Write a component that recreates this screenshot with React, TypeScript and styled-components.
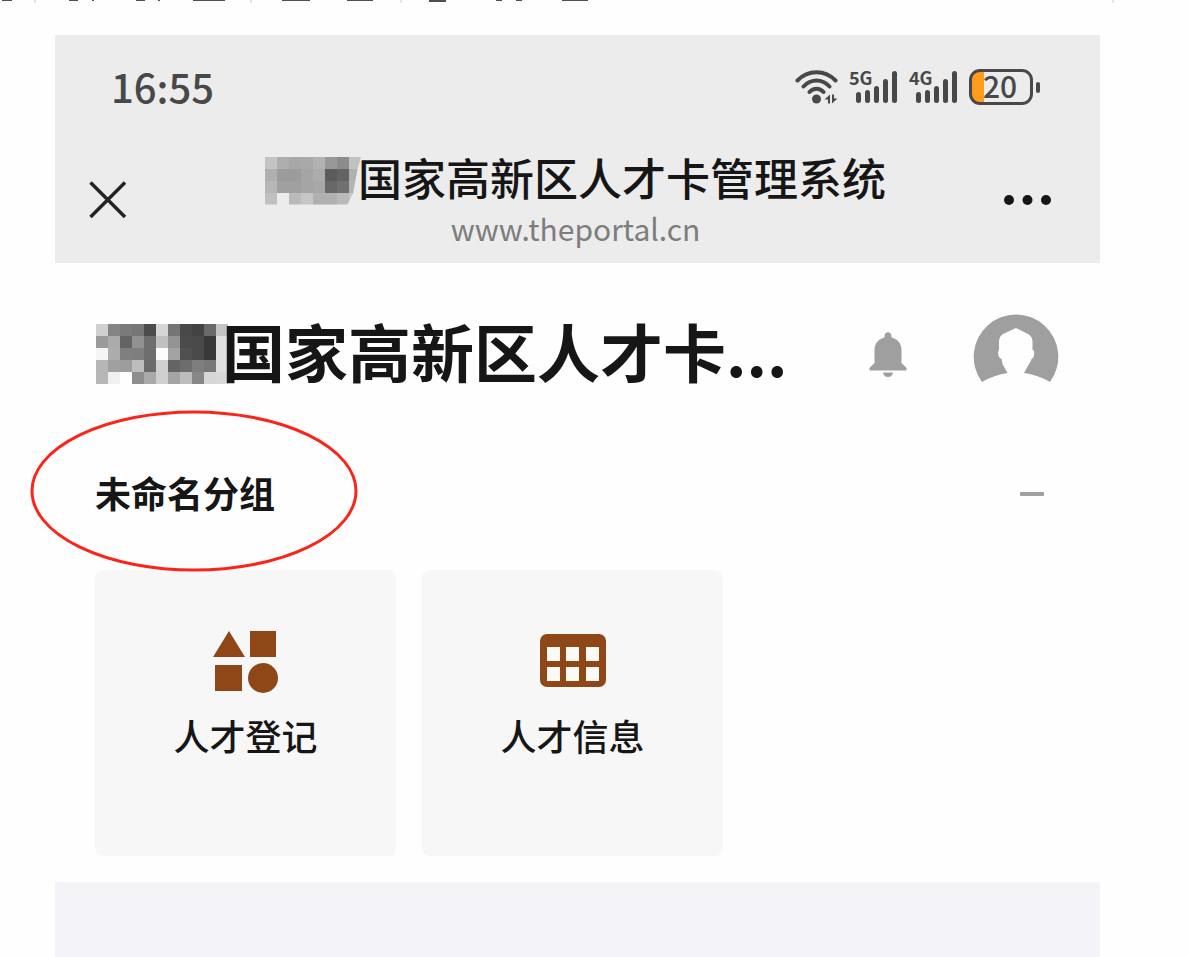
import React from "react";
import styled, { createGlobalStyle } from "styled-components";

const GlobalStyle = createGlobalStyle`
  * { box-sizing: border-box; }
  body {
    margin: 0;
    background: #fefefe;
    color: #161616;
    font-family: "Noto Sans CJK SC", "Noto Sans", sans-serif;
  }
  button { padding: 0; border: 0; background: none; color: inherit; font: inherit; cursor: pointer; }
  h1, p { margin: 0; }
  svg { display: block; }
`;

const Page = styled.div`
  position: relative;
  display: flex;
  flex-direction: column;
  min-height: 100vh;
`;

const Strip = styled.div`
  height: 35px;
  flex: none;
  overflow: hidden;
`;

const Phone = styled.main`
  flex: 1;
  display: flex;
  flex-direction: column;
  margin: 0 89px 0 55px;
`;

const Browser = styled.header`
  background: #ececec;
`;

const StatusBar = styled.div`
  display: flex;
  align-items: center;
  justify-content: space-between;
  height: 106px;
  padding: 0 60px 2px 56px;
  color: #484848;
`;

const Clock = styled.time`
  padding-bottom: 2px;
  font-size: 40px;
  line-height: 48px;
  font-weight: 500;
`;

const StatusIcons = styled.div`
  display: flex;
  align-items: center;
  gap: 11px;
`;

const Signal = styled.div`
  position: relative;
  width: 49px;
`;

const SignalLabel = styled.span`
  position: absolute;
  top: -2px;
  left: 0;
  font-size: 18px;
  line-height: 18px;
  font-weight: 700;
`;

const BatteryBox = styled.div`
  display: flex;
  align-items: center;
  gap: 3px;
`;

const BatteryShell = styled.div`
  width: 64px;
  height: 36px;
  border: 3px solid #484848;
  border-radius: 11px;
  background: linear-gradient(to right, #ff9c1c 12px, transparent 12px);
  padding-left: 11px;
  font-size: 30px;
  line-height: 26px;
  font-weight: 500;
`;

const BatteryTip = styled.div`
  width: 4px;
  height: 11px;
  border-radius: 2px;
  background: #484848;
`;

const NavBar = styled.div`
  display: grid;
  grid-template-columns: 58px 1fr 48px;
  align-items: center;
  height: 122px;
  padding: 0 48px 4px 34px;
`;

const NavTitle = styled.div`
  display: flex;
  flex-direction: column;
  align-items: center;
  padding-bottom: 5px;
`;

const SiteName = styled.p`
  display: flex;
  align-items: center;
  font-size: 44px;
  line-height: 60px;
  font-weight: 500;
  white-space: nowrap;
`;

const SiteUrl = styled.p`
  font-size: 30px;
  line-height: 42px;
  color: #7d7d7d;
`;

const AppBar = styled.div`
  display: flex;
  align-items: center;
  height: 182px;
  padding: 2px 41px 0 41px;
`;

const AppTitle = styled.h1`
  flex: 1;
  display: flex;
  align-items: center;
  padding-bottom: 10px;
  font-size: 63px;
  line-height: 80px;
  font-weight: 700;
  white-space: nowrap;
`;

const AppActions = styled.div`
  display: flex;
  align-items: center;
  gap: 66px;
`;

const Masked = styled.span<{ $overlap: number }>`
  padding-top: 8px;
  margin-right: ${(p) => -p.$overlap}px;
`;

const GroupHeader = styled.div`
  display: flex;
  align-items: center;
  justify-content: space-between;
  height: 98px;
  padding: 0 56px 0 40px;
`;

const GroupName = styled.h2`
  margin: 0;
  padding-bottom: 5px;
  font-size: 36px;
  line-height: 48px;
  font-weight: 700;
`;

const Cards = styled.div`
  display: grid;
  grid-template-columns: repeat(3, 1fr);
  gap: 26px;
  padding: 27px 50px 26px 40px;
`;

const Card = styled.a`
  display: flex;
  flex-direction: column;
  align-items: center;
  gap: 13px;
  height: 286px;
  padding-top: 58px;
  border-radius: 8px;
  background: #f7f7f7;
  color: inherit;
  text-decoration: none;
  font-size: 36px;
  line-height: 52px;
  font-weight: 500;
`;

const Footer = styled.div`
  flex: 1;
  min-height: 75px;
  background: #f3f3f8;
`;

const Annotation = styled.svg`
  position: absolute;
  top: 410px;
  left: 30px;
  pointer-events: none;
`;

const toolbarMarks: [number, number, number][] = [
  [2, 10, 1], [69, 9, 1], [92, 2, 1], [136, 9, 1], [158, 2, 1], [193, 32, 1],
  [282, 28, 1], [347, 26, 1], [429, 17, 2], [496, 6, 1], [516, 6, 1], [562, 26, 1],
];
const toolbarDividers = [34, 250, 400, 1112];

const smallMosaic = [
  "c4 ae a8 a9 b2 98 8c c2",
  "b0 9c 9c a5 ac 5b 63 b0",
  "b7 a0 a0 a5 a8 68 70 b4",
  "c0 ec ba c6 b0 b0 ba c8",
];
const largeMosaic = [
  "d0 84 7a 76 4c d6 75 49 43 69 c4",
  "9a ab 64 91 6e c0 94 4b 4a 39 e0",
  "f5 ac 7f 7e 6e fc a3 50 4a 39 e0",
  "b6 a0 9d bd 6b d0 64 6d 7e 78 e0",
  "b7 f0 fe 8d aa d0 a4 bd 87 d6 d8",
];

function Mosaic({ rows, clip }: { rows: string[]; clip?: string }) {
  const cells = rows.map((r) => r.split(" "));
  return (
    <svg
      width={cells[0].length * 12}
      height={rows.length * 12}
      shapeRendering="crispEdges"
      clipPath={clip}
      aria-hidden="true"
    >
      {cells.map((row, y) =>
        row.map((c, x) => (
          <rect key={`${x}-${y}`} x={x * 12} y={y * 12} width="12" height="12" fill={`#${c}${c}${c}`} />
        ))
      )}
    </svg>
  );
}

function SignalIcon({ label }: { label: string }) {
  return (
    <Signal>
      <svg width="49" height="34" fill="currentColor" aria-hidden="true">
        {[22, 20, 16, 9, 1].map((y, i) => (
          <rect key={y} x={7 + i * 9} y={y} width="5" height={33 - y} rx="2.5" />
        ))}
      </svg>
      <SignalLabel>{label}</SignalLabel>
    </Signal>
  );
}

export default function App() {
  return (
    <>
      <GlobalStyle />
      <Page>
        <Strip aria-hidden="true">
          <svg width="1120" height="4" shapeRendering="crispEdges">
            {toolbarMarks.map(([x, w, h]) => (
              <rect key={x} x={x} y="0" width={w} height={h} fill="#505050" />
            ))}
            {toolbarDividers.map((x) => (
              <rect key={x} x={x} y="0" width="2" height="3" fill="#e2e2e2" />
            ))}
          </svg>
        </Strip>
        <Phone>
          <Browser>
            <StatusBar>
              <Clock>16:55</Clock>
              <StatusIcons>
                <svg width="43" height="36" fill="none" stroke="currentColor" strokeWidth="4" strokeLinecap="round" aria-hidden="true">
                  <path d="M2.500 11.500C13 .5 30 .5 40.500 11.500M8.500 17.500C16 9.500 27 9.500 34.500 17.500M14.500 23C18.500 18.500 24.500 18.500 28.500 23" />
                  <circle cx="21.500" cy="30" r="4.500" fill="currentColor" stroke="none" />
                  <path d="M29.500 30.500L35 25.500V34.500H33V30.500ZM42.500 29.500L37 34.500V25.500H39V29.500Z" fill="currentColor" stroke="none" />
                </svg>
                <SignalIcon label="5G" />
                <SignalIcon label="4G" />
                <BatteryBox>
                  <BatteryShell>20</BatteryShell>
                  <BatteryTip />
                </BatteryBox>
              </StatusIcons>
            </StatusBar>
            <NavBar>
              <button type="button" aria-label="关闭">
                <svg width="38" height="38" stroke="#242424" strokeWidth="3.500" aria-hidden="true">
                  <path d="M1.500 1.500L36 36M36 1.500L1.500 36" />
                </svg>
              </button>
              <NavTitle>
                <SiteName>
                  <Masked $overlap={3}>
                    <Mosaic rows={smallMosaic} clip="polygon(0 0, 100% 0, 96% 30%, 92% 75%, 86% 100%, 0 100%)" />
                  </Masked>
                  国家高新区人才卡管理系统
                </SiteName>
                <SiteUrl>www.theportal.cn</SiteUrl>
              </NavTitle>
              <button type="button" aria-label="更多">
                <svg width="48" height="12" fill="#161616" aria-hidden="true">
                  <circle cx="5" cy="6" r="5" />
                  <circle cx="23.500" cy="6" r="5" />
                  <circle cx="42" cy="6" r="5" />
                </svg>
              </button>
            </NavBar>
          </Browser>

          <AppBar>
            <AppTitle>
              <Masked $overlap={6}>
                <Mosaic rows={largeMosaic} />
              </Masked>
              国家高新区人才卡...
            </AppTitle>
            <AppActions>
              <button type="button" aria-label="通知">
                <svg width="38" height="46" fill="#9f9f9f" aria-hidden="true">
                  <path d="M15.500 5.500V4C15.500-1 22.500-1 22.500 4V5.500C29 7 32.500 12 32.500 18V31L37.500 36V38.500H.5V36L5.500 31V18C5.500 12 9 7 15.500 5.500Z" />
                  <path d="M14 40.500H24C23.500 46.500 14.500 46.500 14 40.500Z" />
                </svg>
              </button>
              <button type="button" aria-label="个人中心">
                <svg width="86" height="82" fill="#9f9f9f" aria-hidden="true">
                  <path d="M9 68A42.300 42.300 0 1 1 77 68C69 63.500 60 60 51 59L56 50C58 47 58.500 46 58.500 45C61 44 61.500 41 61 36.500L59.500 36V27Q59 22 55 20L43 14L30 20Q26.500 22 26 27V36C24.500 37 24.500 44 28.500 45L29.500 50L34.500 59C26 60 17 63.500 9 68Z" />
                </svg>
              </button>
            </AppActions>
          </AppBar>

          <section>
            <GroupHeader>
              <GroupName>未命名分组</GroupName>
              <button type="button" aria-label="收起">
                <svg width="24" height="4" aria-hidden="true">
                  <rect width="24" height="4" rx="1" fill="#9f9f9f" />
                </svg>
              </button>
            </GroupHeader>
            <Cards>
              <Card href="#register">
                <svg width="66" height="68" fill="#8f4718" aria-hidden="true">
                  <path d="M16 3L32 29H0Z" />
                  <rect x="37" y="3" width="26" height="26" />
                  <rect x="2" y="37" width="27" height="26" />
                  <circle cx="50" cy="50" r="15" />
                </svg>
                人才登记
              </Card>
              <Card href="#info">
                <svg width="66" height="68" fill="#8f4718" aria-hidden="true">
                  <rect y="6" width="66" height="53" rx="7" />
                  <g fill="#fdf9f5">
                    {[19, 39].map((y) =>
                      [7, 26, 46].map((x) => <rect key={`${x}-${y}`} x={x} y={y} width="13" height="14" />)
                    )}
                  </g>
                </svg>
                人才信息
              </Card>
            </Cards>
          </section>
          <Footer />
        </Phone>
        <Annotation width="328" height="162" aria-hidden="true">
          <ellipse cx="164" cy="81" rx="162" ry="79" fill="none" stroke="#fb2418" strokeWidth="3" />
        </Annotation>
      </Page>
    </>
  );
}
